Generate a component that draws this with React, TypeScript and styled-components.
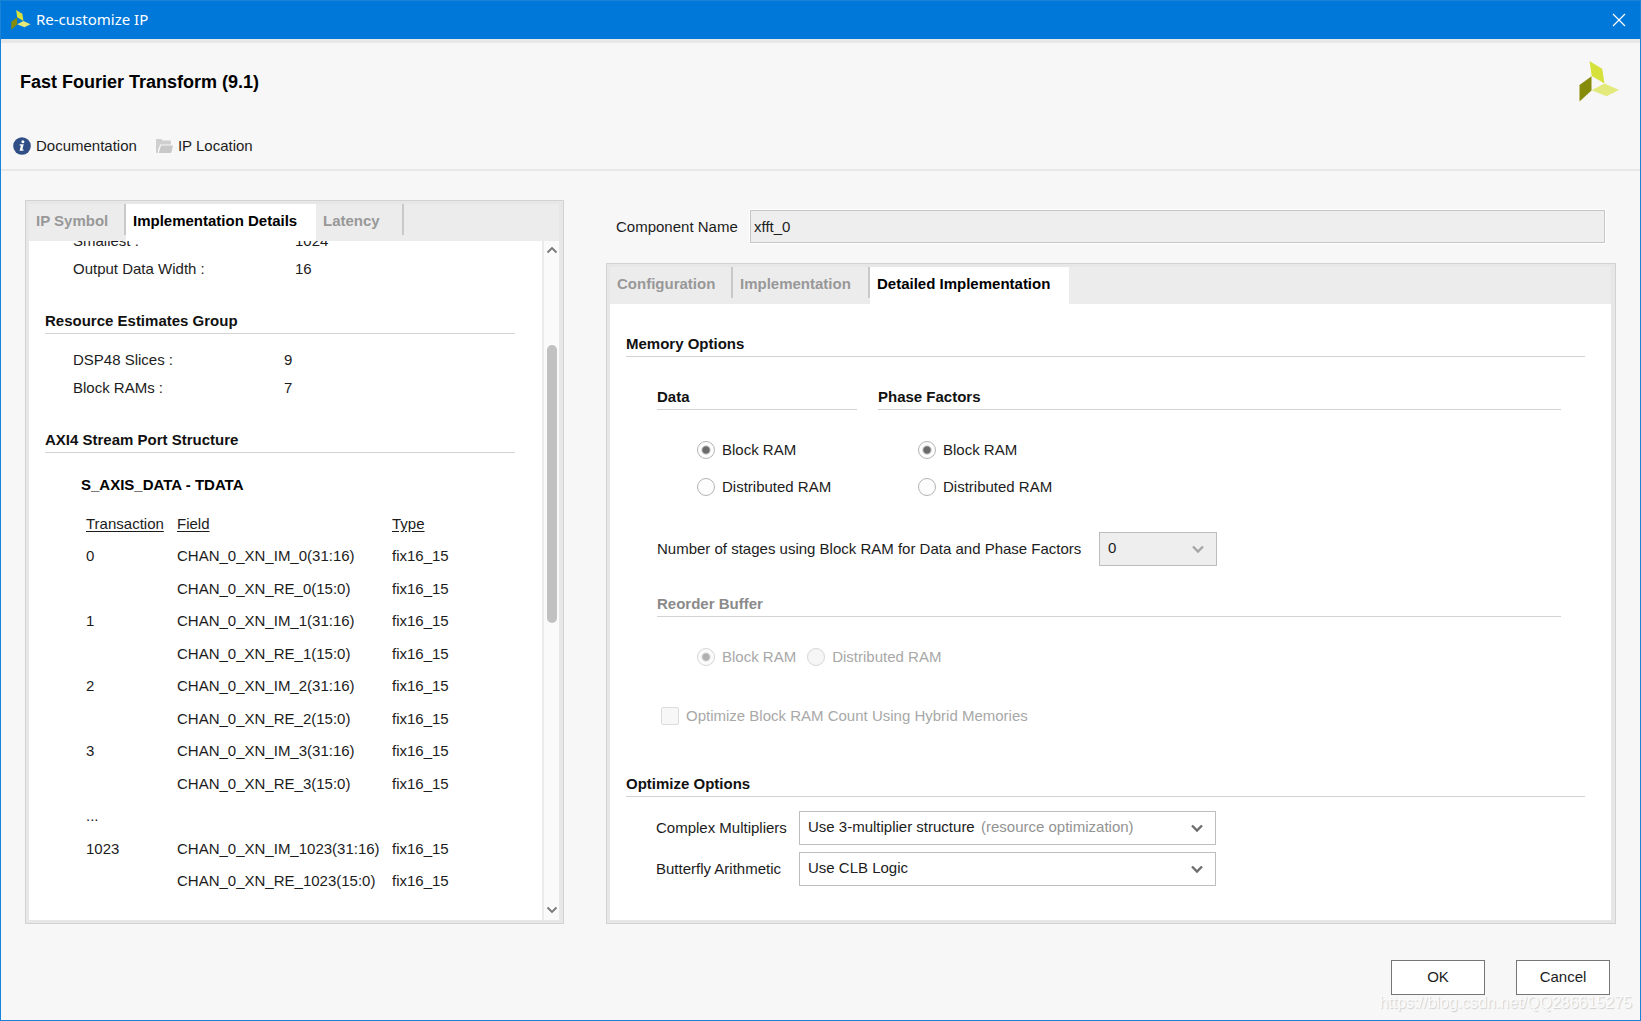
import React from "react";
import styled, { createGlobalStyle, css } from "styled-components";

const GlobalStyle = createGlobalStyle`
  * { box-sizing: border-box; }
  body {
    margin: 0;
    background: #f7f7f7;
    color: #1c1c1c;
    font: 15px/20px "Liberation Sans", Arial, sans-serif;
  }
  button, input, select { font: inherit; color: inherit; }
`;

const Window = styled.div`
  display: flex;
  flex-direction: column;
  min-height: 100vh;
  border: 1px solid #1883d7;
`;

const TitleBar = styled.div`
  display: flex;
  align-items: center;
  gap: 5px;
  height: 38px;
  padding: 0 14px 0 10px;
  background: #0078d9;
  color: #fff;
`;

const WindowTitle = styled.span`
  flex: 1;
  padding-bottom: 2px;
  font-family: "Noto Sans", "Open Sans", sans-serif;
  font-size: 15px;
`;

const CloseButton = styled.button`
  display: flex;
  padding: 0;
  border: 0;
  background: none;
`;

const Header = styled.header`
  padding: 18px 20px 13px 12px;
  border-top: 4px solid #e8e8e8;
  border-bottom: 2px solid #e8e8e8;
`;

const HeaderTop = styled.div`
  display: flex;
  align-items: center;
  justify-content: space-between;
  padding-left: 7px;
`;

const ProductTitle = styled.h1`
  margin: 0;
  color: #000;
  font-size: 18px;
  line-height: 24px;
`;

const Toolbar = styled.nav`
  display: flex;
  gap: 19px;
  margin-top: 34px;
`;

const ToolLink = styled.a`
  display: flex;
  align-items: center;
  gap: 5px;
  color: inherit;
  text-decoration: none;
`;

const Body = styled.main`
  display: grid;
  flex: 1;
  grid-template-columns: 539px minmax(0, 1fr);
  gap: 42px;
  padding: 29px 24px 0;
`;

const Column = styled.div`
  display: flex;
  flex-direction: column;
  gap: 20px;
  padding-top: 10px;
`;

const Panel = styled.section`
  display: flex;
  flex: 1;
  flex-direction: column;
  padding: 3px 4px 3px 3px;
  border: 1px solid #d2d2d2;
  background: #e7e7e7;
`;

const TabList = styled.div`
  display: flex;
  align-items: flex-start;
  height: 37px;
  background: #ececec;
`;

const Tab = styled.button<{ $active?: boolean; $width: number }>`
  width: ${(p) => p.$width}px;
  height: 31px;
  padding: 2px 0 0 7px;
  border: 0;
  border-right: 2px solid #c9c9c9;
  background: none;
  color: #989898;
  font-weight: bold;
  text-align: left;
  white-space: nowrap;
  ${(p) =>
    p.$active &&
    css`
      height: 37px;
      padding-bottom: 6px;
      border-right: 0;
      background: #fff;
      color: #000;
    `}
`;

const ScrollPane = styled.div`
  display: flex;
  flex: 1;
  background: #fff;
`;

const Viewport = styled.div`
  flex: 1;
  overflow: hidden;
  padding: 0 27px 0 16px;
`;

const Scrolled = styled.div`
  margin-top: -14px;
`;

const Scrollbar = styled.div`
  display: flex;
  flex-direction: column;
  align-items: center;
  width: 17px;
  padding: 5px 0 6px;
  border-left: 2px solid #ebebeb;
  background: #fafafa;
`;

const Track = styled.div`
  display: grid;
  flex: 1;
  grid-template-rows: 91fr 278fr 283fr;
`;

const Thumb = styled.div`
  grid-row: 2;
  width: 10px;
  border-radius: 5px;
  background: #c1c1c1;
`;

const Heading = styled.h2<{ $space: number; $disabled?: boolean }>`
  margin: ${(p) => p.$space - 1}px 0 0;
  padding-bottom: 2px;
  border-bottom: 1px solid #d3d3d3;
  color: ${(p) => (p.$disabled ? "#8a8a8a" : "#111")};
  font-size: 15px;
  line-height: 20px;
`;

const Facts = styled.dl<{ $labelWidth: number; $space?: number }>`
  display: grid;
  grid-template-columns: ${(p) => p.$labelWidth}px 1fr;
  margin: ${(p) => p.$space ?? 0}px 0 0;
  padding-left: 28px;
  line-height: 28px;
  dd { margin: 0; }
`;

const SubHeading = styled.h3`
  margin: 22px 0 12px;
  padding-left: 36px;
  color: #000;
  font-size: 15px;
  line-height: 20px;
`;

const PortTable = styled.table`
  margin-left: 41px;
  border-collapse: collapse;
  th, td {
    height: 32px;
    padding: 0;
    font-weight: normal;
    text-align: left;
    white-space: nowrap;
  }
  th { height: 33px; text-decoration: underline; text-underline-offset: 2px; }
  th:nth-child(1) { width: 91px; }
  th:nth-child(2) { width: 215px; }
  tbody tr:nth-child(even) td { height: 33px; }
`;

const NameRow = styled.div`
  display: flex;
  align-items: center;
  padding: 0 11px 0 10px;
  label { width: 134px; }
`;

const NameInput = styled.input`
  flex: 1;
  height: 33px;
  padding: 0 3px;
  border: 1px solid #c6c6c6;
  outline: 1px solid #fff;
  background: #eee;
`;

const Options = styled.div`
  flex: 1;
  padding: 0 26px 32px 16px;
  background: #fff;
`;

const Indented = styled.div`
  padding: 0 24px 0 31px;
`;

const MemoryGrid = styled.div`
  display: grid;
  grid-template-columns: 200px 1fr;
  gap: 21px;
`;

const RadioGroup = styled.div<{ $row?: boolean }>`
  display: flex;
  flex-direction: ${(p) => (p.$row ? "row" : "column")};
  gap: ${(p) => (p.$row ? 11 : 17)}px;
  margin-top: 30px;
  padding-left: 40px;
`;

const Choice = styled.label<{ $disabled?: boolean }>`
  display: flex;
  align-items: center;
  gap: 7px;
  color: ${(p) => (p.$disabled ? "#a8a8a8" : "inherit")};
`;

const Radio = styled.input.attrs({ type: "radio" })`
  appearance: none;
  width: 18px;
  height: 18px;
  margin: 0;
  border: 1px solid #b4b4b4;
  border-radius: 50%;
  background: #fdfdfd;
  &:checked { background: radial-gradient(circle, #6a6a6a 3px, #fdfdfd 5px); }
  &:disabled { border-color: #d6d6d6; background: #f6f6f6; }
  &:disabled:checked { background: radial-gradient(circle, #b0b0b0 3px, #fbfbfb 5px); }
`;

const CheckRow = styled.div`
  margin-top: 39px;
  padding-left: 4px;
`;

const Checkbox = styled.input.attrs({ type: "checkbox" })`
  appearance: none;
  width: 18px;
  height: 18px;
  margin: 0;
  border: 1px solid #dcdcdc;
  border-radius: 2px;
  background: #f7f7f7;
`;

const StageRow = styled.div`
  display: flex;
  align-items: center;
  gap: 9px;
  margin-top: 35px;
  label { flex-basis: 433px; }
`;

const FieldGrid = styled.div`
  display: grid;
  grid-template-columns: 143px 417px;
  align-items: center;
  gap: 7px 0;
  margin-top: 14px;
  padding-left: 30px;
`;

const SelectFrame = styled.div<{ $width?: number }>`
  display: grid;
  align-items: center;
  width: ${(p) => (p.$width ? `${p.$width}px` : "auto")};
  height: 34px;
  > * { grid-area: 1 / 1; }
  > svg { justify-self: end; margin-right: 12px; pointer-events: none; }
`;

const Select = styled.select`
  appearance: none;
  width: 100%;
  height: 34px;
  padding: 0 32px 2px 8px;
  border: 1px solid #bdbdbd;
  border-radius: 0;
  background: #fff;
  &:disabled { background: #eee; color: #1c1c1c; opacity: 1; }
`;

const Hint = styled.span`
  padding: 0 0 2px 182px;
  color: #939393;
  pointer-events: none;
`;

const Footer = styled.footer`
  display: flex;
  justify-content: flex-end;
  gap: 31px;
  padding: 36px 30px 25px;
`;

const DialogButton = styled.button`
  width: 94px;
  height: 35px;
  padding: 0 0 2px;
  border: 1px solid #767676;
  background: #fff;
`;

const Watermark = styled.span`
  position: absolute;
  right: 9px;
  bottom: 8px;
  color: #fbfbfb;
  font-size: 16px;
  text-shadow: 1px 1px 1px #cfcfcf;
  pointer-events: none;
`;

const Frame = styled.div`
  position: relative;
`;

const Logo = ({ size }: { size: number }) => (
  <svg width={size} height={size} viewBox="0 0 40 41" aria-hidden="true">
    <path d="M10 0 22.700 7.700 25 22.500 12.200 15Z" fill="#d7e13c" />
    <path d="M0 24 12 15.200V29.500L0 40.500Z" fill="#868b0a" />
    <path d="M12.200 29.300 25 22.600 39.500 29 27 35.300Z" fill="#e3e97a" />
  </svg>
);

const Chevron = ({ color }: { color: string }) => (
  <svg width="14" height="10" viewBox="0 0 14 10" fill="none" aria-hidden="true">
    <path d="M2 2.500 7 7.500 12 2.500" stroke={color} strokeWidth="2.400" />
  </svg>
);

const ScrollArrow = ({ up }: { up?: boolean }) => (
  <svg width="12" height="8" viewBox="0 0 12 8" fill="none" aria-hidden="true">
    <path d={up ? "M1.500 6.500 6 2 10.500 6.500" : "M1.500 1.500 6 6 10.500 1.500"} stroke="#777" strokeWidth="1.800" />
  </svg>
);

const InfoIcon = () => (
  <svg width="18" height="18" viewBox="0 0 18 18" aria-hidden="true">
    <circle cx="9" cy="9" r="8.800" fill="#2f4f86" />
    <circle cx="9.900" cy="4.700" r="1.500" fill="#fff" />
    <path d="M6.800 7.300h3.900l-1.300 5.200h1.300l-.3 1.300H6.600l1.300-5.200H6.500Z" fill="#fff" />
  </svg>
);

const FolderIcon = () => (
  <svg width="17" height="16" viewBox="0 0 17 16" aria-hidden="true">
    <path d="M0 2q0-1 1-1h4.500l1.300 1.500H14q1 0 1 1V6.500H4.200L2 12V15H1q-1 0-1-1Z" fill="#cfcfcf" />
    <path d="M5 7.500h11q1 0 .8 1l-1.300 5.500q-.3 1-1.200 1H2.700Z" fill="#c8c8c8" />
  </svg>
);

const CloseIcon = () => (
  <svg width="14" height="14" viewBox="0 0 14 14" aria-hidden="true">
    <path d="M1 1 13 13M13 1 1 13" stroke="#fff" strokeWidth="1.200" />
  </svg>
);

const ports: [string, string][] = [
  ...[0, 1, 2, 3].flatMap((n): [string, string][] => [
    [`${n}`, `CHAN_0_XN_IM_${n}(31:16)`],
    ["", `CHAN_0_XN_RE_${n}(15:0)`],
  ]),
  ["...", ""],
  ["1023", "CHAN_0_XN_IM_1023(31:16)"],
  ["", "CHAN_0_XN_RE_1023(15:0)"],
];

function RamChoices({ name, disabled, row }: { name: string; disabled?: boolean; row?: boolean }) {
  return (
    <RadioGroup $row={row} role="radiogroup" aria-label={name}>
      <Choice $disabled={disabled}>
        <Radio name={name} defaultChecked disabled={disabled} />
        Block RAM
      </Choice>
      <Choice $disabled={disabled}>
        <Radio name={name} disabled={disabled} />
        Distributed RAM
      </Choice>
    </RadioGroup>
  );
}

function DetailsPanel() {
  return (
    <Panel>
      <TabList role="tablist">
        <Tab role="tab" $width={97}>IP Symbol</Tab>
        <Tab role="tab" $width={190} $active aria-selected>Implementation Details</Tab>
        <Tab role="tab" $width={88}>Latency</Tab>
      </TabList>
      <ScrollPane>
        <Viewport>
          <Scrolled>
            <Facts $labelWidth={222}>
              <dt>Smallest :</dt>
              <dd>1024</dd>
              <dt>Output Data Width :</dt>
              <dd>16</dd>
            </Facts>
            <Heading $space={29}>Resource Estimates Group</Heading>
            <Facts $labelWidth={211} $space={12}>
              <dt>DSP48 Slices :</dt>
              <dd>9</dd>
              <dt>Block RAMs :</dt>
              <dd>7</dd>
            </Facts>
            <Heading $space={29}>AXI4 Stream Port Structure</Heading>
            <SubHeading>S_AXIS_DATA - TDATA</SubHeading>
            <PortTable>
              <thead>
                <tr>
                  <th>Transaction</th>
                  <th>Field</th>
                  <th>Type</th>
                </tr>
              </thead>
              <tbody>
                {ports.map(([transaction, field], i) => (
                  <tr key={i}>
                    <td>{transaction}</td>
                    <td>{field}</td>
                    <td>{field && "fix16_15"}</td>
                  </tr>
                ))}
              </tbody>
            </PortTable>
          </Scrolled>
        </Viewport>
        <Scrollbar>
          <ScrollArrow up />
          <Track>
            <Thumb />
          </Track>
          <ScrollArrow />
        </Scrollbar>
      </ScrollPane>
    </Panel>
  );
}

function OptionsPanel() {
  return (
    <Panel>
      <TabList role="tablist">
        <Tab role="tab" $width={123}>Configuration</Tab>
        <Tab role="tab" $width={137}>Implementation</Tab>
        <Tab role="tab" $width={199} $active aria-selected>Detailed Implementation</Tab>
      </TabList>
      <Options>
        <Heading $space={31}>Memory Options</Heading>
        <Indented>
          <MemoryGrid>
            <div>
              <Heading $space={31}>Data</Heading>
              <RamChoices name="data" />
            </div>
            <div>
              <Heading $space={31}>Phase Factors</Heading>
              <RamChoices name="phase" />
            </div>
          </MemoryGrid>
          <StageRow>
            <label htmlFor="stages">Number of stages using Block RAM for Data and Phase Factors</label>
            <SelectFrame $width={118}>
              <Select id="stages" disabled>
                <option>0</option>
              </Select>
              <Chevron color="#a6a6a6" />
            </SelectFrame>
          </StageRow>
          <Heading $space={29} $disabled>Reorder Buffer</Heading>
          <RamChoices name="reorder" disabled row />
          <CheckRow>
            <Choice $disabled>
              <Checkbox disabled />
              Optimize Block RAM Count Using Hybrid Memories
            </Choice>
          </CheckRow>
        </Indented>
        <Heading $space={49}>Optimize Options</Heading>
        <FieldGrid>
          <label htmlFor="multipliers">Complex Multipliers</label>
          <SelectFrame>
            <Select id="multipliers">
              <option>Use 3-multiplier structure</option>
            </Select>
            <Hint>(resource optimization)</Hint>
            <Chevron color="#6e6e6e" />
          </SelectFrame>
          <label htmlFor="butterfly">Butterfly Arithmetic</label>
          <SelectFrame>
            <Select id="butterfly">
              <option>Use CLB Logic</option>
            </Select>
            <Chevron color="#6e6e6e" />
          </SelectFrame>
        </FieldGrid>
      </Options>
    </Panel>
  );
}

export default function App() {
  return (
    <Frame>
      <GlobalStyle />
      <Window>
        <TitleBar>
          <Logo size={20} />
          <WindowTitle>Re-customize IP</WindowTitle>
          <CloseButton aria-label="Close">
            <CloseIcon />
          </CloseButton>
        </TitleBar>
        <Header>
          <HeaderTop>
            <ProductTitle>Fast Fourier Transform (9.1)</ProductTitle>
            <Logo size={41} />
          </HeaderTop>
          <Toolbar>
            <ToolLink href="#documentation">
              <InfoIcon />
              Documentation
            </ToolLink>
            <ToolLink href="#location">
              <FolderIcon />
              IP Location
            </ToolLink>
          </Toolbar>
        </Header>
        <Body>
          <DetailsPanel />
          <Column>
            <NameRow>
              <label htmlFor="component">Component Name</label>
              <NameInput id="component" defaultValue="xfft_0" readOnly />
            </NameRow>
            <OptionsPanel />
          </Column>
        </Body>
        <Footer>
          <DialogButton>OK</DialogButton>
          <DialogButton>Cancel</DialogButton>
        </Footer>
      </Window>
      <Watermark>https://blog.csdn.net/QQ286615275</Watermark>
    </Frame>
  );
}
